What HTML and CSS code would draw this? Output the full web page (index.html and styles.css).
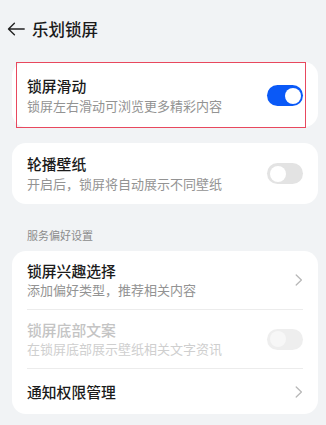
FILE: index.html
```html
<!DOCTYPE html>
<html lang="zh">
<head>
<meta charset="utf-8">
<link rel="stylesheet" href="styles.css">
</head>
<body>
<header class="header">
  <svg class="back" width="18" height="14" viewBox="0 0 18 14"><path d="M17.2 7H1.6M7.4 1.2L1.5 7l5.9 5.8" fill="none" stroke="#222" stroke-width="1.4" stroke-linecap="round" stroke-linejoin="round"/></svg>
  <h1 class="title">乐划锁屏</h1>
</header>
<main class="content">
  <section class="card highlighted">
    <div class="row">
      <div class="texts">
        <div class="row-title">锁屏滑动</div>
        <div class="row-sub">锁屏左右滑动可浏览更多精彩内容</div>
      </div>
      <span class="toggle on"></span>
    </div>
    <div class="mark"></div>
  </section>
  <section class="card">
    <div class="row">
      <div class="texts">
        <div class="row-title">轮播壁纸</div>
        <div class="row-sub">开启后，锁屏将自动展示不同壁纸</div>
      </div>
      <span class="toggle"></span>
    </div>
  </section>
  <div class="section-label">服务偏好设置</div>
  <section class="card list">
    <div class="row">
      <div class="texts">
        <div class="row-title">锁屏兴趣选择</div>
        <div class="row-sub">添加偏好类型，推荐相关内容</div>
      </div>
      <svg class="chev" width="8" height="12" viewBox="0 0 8 12"><path d="M1.2 1l5.2 5-5.2 5" fill="none" stroke="#b8b8b8" stroke-width="1.3" stroke-linecap="round" stroke-linejoin="round"/></svg>
    </div>
    <div class="divider"></div>
    <div class="row disabled">
      <div class="texts">
        <div class="row-title">锁屏底部文案</div>
        <div class="row-sub">在锁屏底部展示壁纸相关文字资讯</div>
      </div>
      <span class="toggle"></span>
    </div>
    <div class="divider"></div>
    <div class="row single">
      <div class="texts">
        <div class="row-title">通知权限管理</div>
      </div>
      <svg class="chev" width="8" height="12" viewBox="0 0 8 12"><path d="M1.2 1l5.2 5-5.2 5" fill="none" stroke="#b8b8b8" stroke-width="1.3" stroke-linecap="round" stroke-linejoin="round"/></svg>
    </div>
  </section>
</main>
</body>
</html>
```
FILE: styles.css
```css
* { box-sizing: border-box; }
html, body { margin: 0; padding: 0; }
body {
  background: #f1f3f5;
  font-family: "Noto Sans CJK SC", "Noto Sans", sans-serif;
  color: #1b1b1b;
  width: 326px;
  height: 425px;
  overflow: hidden;
}
.header {
  display: flex;
  align-items: center;
  height: 56px;
  padding: 1px 0 0 7px;
}
.back { display: block; margin-right: 7px; }
.title {
  margin: 0;
  font-size: 16.5px;
  font-weight: 500;
  line-height: 22px;
  color: #1a1a1a;
}
.content {
  padding: 6px 8px 0 12px;
}
.card {
  position: relative;
  background: #fff;
  border-radius: 14px;
  padding: 0 15px;
  margin-bottom: 16px;
}
.row {
  display: flex;
  align-items: center;
  justify-content: space-between;
  min-height: 61px;
  padding: 11px 0;
}
.highlighted .row { min-height: 65px; padding-top: 13px; }
.list .row { min-height: 58px; padding: 10px 0; }
.list .row .row-sub { line-height: 18px; }
.list .row.single { min-height: 45px; padding: 0; }
.texts { display: flex; flex-direction: column; }
.row-title {
  font-size: 14.8px;
  font-weight: 500;
  line-height: 20px;
  color: #1b1b1b;
}
.row-sub {
  font-size: 13px;
  line-height: 19px;
  color: #939393;
}
.disabled .row-title { color: #c4c4c4; }
.disabled .row-sub { color: #cfcfcf; }
.toggle {
  position: relative;
  flex: none;
  width: 36px;
  height: 21px;
  border-radius: 11px;
  background: #e3e3e3;
}
.toggle::after {
  content: "";
  position: absolute;
  top: 2.5px;
  left: 2.5px;
  width: 16px;
  height: 16px;
  border-radius: 50%;
  background: #fff;
}
.toggle.on { background: #0a59f7; }
.toggle.on::after { left: auto; right: 2.5px; }
.disabled .toggle { background: #eeeeee; }
.disabled .toggle::after { background: #f7f7f7; }
.chev { flex: none; display: block; }
.divider {
  height: 1px;
  background: #ececec;
}
.section-label {
  font-size: 11px;
  line-height: 16px;
  color: #8c8c8c;
  padding: 7px 0 0 15px;
  height: 31px;
}
.mark {
  position: absolute;
  left: 4px;
  top: 0;
  width: 290px;
  height: 66px;
  border: 1.5px solid #e8485e;
  pointer-events: none;
}
```
